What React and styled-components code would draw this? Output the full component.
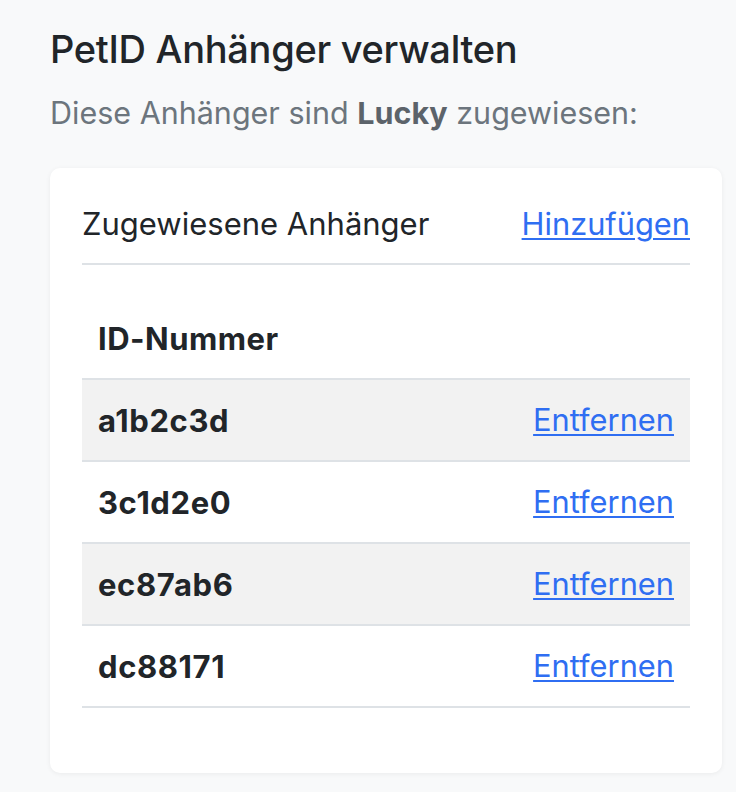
import styled, { createGlobalStyle } from "styled-components";

const GlobalStyle = createGlobalStyle`
  html, body {
    margin: 0;
    padding: 0;
    background: #f8f9fa;
  }
  body {
    font-family: Inter, "Noto Sans", "Liberation Sans", sans-serif;
    color: #212529;
  }
`;

const tags = ["a1b2c3d", "3c1d2e0", "ec87ab6", "dc88171"];

const App = () => {
  return (
    <>
      <GlobalStyle />
      <Page>
        <Title>PetID Anhänger verwalten</Title>
        <Lead>
          Diese Anhänger sind <strong>Lucky</strong> zugewiesen:
        </Lead>
        <Card>
          <CardHeader>
            <CardTitle>Zugewiesene Anhänger</CardTitle>
            <Link href="#">Hinzufügen</Link>
          </CardHeader>
          <Table>
            <thead>
              <tr>
                <Th>ID-Nummer</Th>
                <Th />
              </tr>
            </thead>
            <tbody>
              {tags.map((id, i) => (
                <Row key={id} $striped={i % 2 === 0}>
                  <IdCell>{id}</IdCell>
                  <ActionCell>
                    <Link href="#">Entfernen</Link>
                  </ActionCell>
                </Row>
              ))}
            </tbody>
          </Table>
        </Card>
      </Page>
    </>
  );
};

const Page = styled.div`
  padding: 26px 14px 20px 50px;
`;

const Title = styled.h1`
  margin: 0;
  font-size: 38px;
  font-weight: 500;
  line-height: 46px;
  letter-spacing: -0.3px;
`;

const Lead = styled.p`
  margin: 21px 0 0;
  font-size: 30.5px;
  line-height: 40px;
  color: #6c757d;

  strong {
    font-weight: 700;
    color: #5c636a;
  }
`;

const Card = styled.div`
  margin-top: 35px;
  background: #fff;
  border-radius: 10px;
  box-shadow: 0 1px 5px rgba(0, 0, 0, 0.06);
  padding: 34px 32px 65px 32px;
`;

const CardHeader = styled.div`
  display: flex;
  justify-content: space-between;
  align-items: center;
  padding-bottom: 17px;
  border-bottom: 2px solid #dee2e6;
`;

const CardTitle = styled.h2`
  margin: 0;
  font-size: 31px;
  font-weight: 400;
  line-height: 44px;
`;

const Link = styled.a`
  color: #2f6ef2;
  text-decoration: underline;
  font-size: 30.8px;
  line-height: 44px;
  text-underline-offset: 3px;
  text-decoration-thickness: 2px;
`;

const Table = styled.table`
  width: 100%;
  margin-top: 33px;
  border-collapse: collapse;
`;

const Th = styled.th`
  text-align: left;
  font-size: 31px;
  font-weight: 700;
  letter-spacing: 0.5px;
  height: 80px;
  padding: 0 16px;
  border-bottom: 2px solid #dee2e6;
`;

const Row = styled.tr`
  background: ${(p) => (p.$striped ? "#f2f2f2" : "#fff")};
  border-bottom: 2px solid #dee2e6;
`;

const IdCell = styled.td`
  height: 80px;
  padding: 0 16px;
  font-size: 31px;
  font-weight: 700;
  letter-spacing: 0.6px;
`;

const ActionCell = styled.td`
  padding: 0 16px;
  text-align: right;
`;

export default App;
